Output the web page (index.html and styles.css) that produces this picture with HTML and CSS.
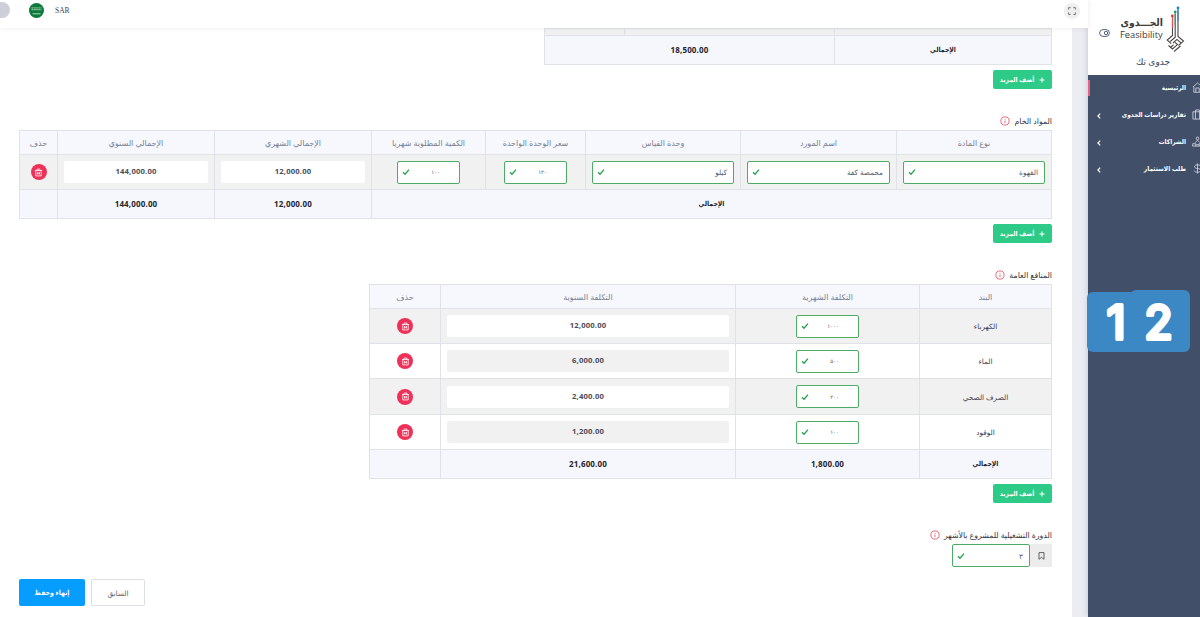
FILE: index.html
```
<!DOCTYPE html>
<html lang="ar" dir="rtl">
<head>
  <meta charset="UTF-8" />
  <meta name="viewport" content="width=device-width, initial-scale=1" />
  <title>جدوى تك</title>
  <link rel="stylesheet" href="styles.css">
</head>
<body>
  <!-- shared icons -->
  <svg width="0" height="0" class="icon-defs" aria-hidden="true">
    <symbol id="i-check" viewBox="0 0 8 8"><path d="M1 4.3 3 6.2 7 1.6" fill="none" stroke="#28a04c" stroke-width="1.3"/></symbol>
    <symbol id="i-info" viewBox="0 0 10 10"><circle cx="5" cy="5" r="4.1" fill="none" stroke="#e0475b" stroke-width=".8"/><path d="M5 4.5v2.6M5 2.8v.9" stroke="#e0475b" stroke-width=".8"/></symbol>
    <symbol id="i-trash" viewBox="0 0 10 10"><path d="M1 2.8h8M3.4 2.6V1.2h3.2v1.4M2 3v5.8h6V3M4 4.5v2.7M6 4.5v2.7M4 5.8h2" fill="none" stroke="#fff" stroke-width=".9"/></symbol>
    <symbol id="i-chevron" viewBox="0 0 6 8"><path d="M4.2 1.6 1.9 4l2.3 2.4" fill="none" stroke="#fff" stroke-width="1.2"/></symbol>
    <symbol id="i-plus" viewBox="0 0 6 6"><path d="M3 .5v5M.5 3h5" stroke="#fff" stroke-width="1"/></symbol>
  </svg>

  <div class="app">
    <aside class="sidebar">
      <div class="brand">
        <div class="brand-row">
          <svg class="brand-mark" width="19" height="47" viewBox="0 0 19 47">
            <g fill="none" stroke="#4a4644" stroke-width="1.1">
              <path d="M6.5 12v17.5L1.2 34l4 3.6"/>
              <path d="M9.2 8v23.2L4.2 35.5M2.5 39.5l4 3.5 5-4.4-2.5-2.2"/>
              <path d="M12 4v26.5l5.5 4.6-5 4.4M7 37l4-3.6 4.5 4M4.5 41.5l3-2.6M8 45.5l6.5-5.5"/>
            </g>
            <path d="M6.5 10v12" stroke="#e8505b" stroke-width="1.2"/>
            <path d="M9.2 6v13" stroke="#2fa878" stroke-width="1.2"/>
            <path d="M12 2v13" stroke="#3c86c8" stroke-width="1.2"/>
            <circle cx="6.3" cy="10" r="1.4" fill="#e8333f"/>
            <circle cx="9.2" cy="6" r="1.4" fill="#20a06a"/>
            <circle cx="12" cy="2" r="1.4" fill="#1f7fd0"/>
          </svg>
          <div class="brand-name">
            <span class="brand-ar">الجـــدوى</span>
            <span class="brand-en">Feasibility</span>
          </div>
          <svg class="brand-toggle" width="11" height="8" viewBox="0 0 11 8"><rect x=".6" y=".6" width="9.8" height="6.8" rx="3.4" fill="none" stroke="#46526b" stroke-width=".9"/><circle cx="7" cy="4" r="1.7" fill="none" stroke="#46526b" stroke-width=".9"/></svg>
        </div>
        <div class="brand-sub">جدوى تك</div>
      </div>
      <nav class="menu">
        <a class="menu-item active">
          <svg class="menu-icon" viewBox="0 0 12 12"><path d="M1 5.5 6 1l5 4.5M2 5v6.2h8V5M4.2 11V6.5h3.6V11" /></svg>
          <span>الرئيسية</span>
        </a>
        <a class="menu-item">
          <svg class="menu-icon" viewBox="0 0 12 12"><path d="M1 3h10v8H1zM4 3V1h4v2M3.8 3v8M8.2 3v8" /></svg>
          <span>تقارير دراسات الجدوى</span>
          <svg class="menu-arrow" width="6" height="8"><use href="#i-chevron"/></svg>
        </a>
        <a class="menu-item">
          <svg class="menu-icon" viewBox="0 0 12 12"><path d="M6 1a1.5 1.5 0 1 1 0 3a1.5 1.5 0 1 1 0-3M3.4 7.2 6 4.6l2.6 2.6M.8 11V8.4h3.4V11M7.8 11V8.4h3.4V11M.5 11h11M4.5 9.5h3" /></svg>
          <span>الشراكات</span>
          <svg class="menu-arrow" width="6" height="8"><use href="#i-chevron"/></svg>
        </a>
        <a class="menu-item">
          <svg class="menu-icon" viewBox="0 0 12 12"><path d="M6 .5v11M9.3 3.6C9 2.4 7.8 2 6 2S2.8 2.7 2.8 4 4 5.8 6 6s3.4.7 3.4 2S8 10 6 10 2.8 9.5 2.5 8.3" /></svg>
          <span>طلب الاستثمار</span>
          <svg class="menu-arrow" width="6" height="8"><use href="#i-chevron"/></svg>
        </a>
      </nav>
    </aside>

    <div class="page">
      <header class="topbar">
        <button class="fullscreen" aria-label="ملء الشاشة">
          <svg width="8" height="8" viewBox="0 0 8 8"><path d="M.6 2.6V.6h2M5.4.6h2v2M7.4 5.4v2h-2M2.6 7.4h-2v-2" fill="none" stroke="#666" stroke-width=".9"/></svg>
        </button>
        <div class="topbar-user">
          <span class="currency">SAR</span>
          <svg class="flag" width="15" height="15" viewBox="0 0 15 15"><circle cx="7.5" cy="7.5" r="7.5" fill="#0b7a3b"/><path d="M2.5 4.8h10M2.5 6.6h10" stroke="#8cc29b" stroke-width="1.3" stroke-dasharray="1.5 .4"/><path d="M3.5 10.8h8" stroke="#d5eadb" stroke-width=".8"/></svg>
          <span class="avatar"></span>
        </div>
      </header>

      <main class="content">
        <table class="grid grid-top">
          <colgroup><col style="width:217px"><col style="width:210px"><col style="width:80px"></colgroup>
          <tr class="cut"><td></td><td></td><td></td></tr>
          <tr class="total"><td>الإجمالي</td><td colspan="2" class="num">18,500.00</td></tr>
        </table>
        <button class="btn-add"><svg width="6" height="6"><use href="#i-plus"/></svg> أضف المزيد</button>

        <h3 class="section-title">المواد الخام <svg width="10" height="10"><use href="#i-info"/></svg></h3>
        <table class="grid">
          <colgroup><col style="width:155px"><col style="width:156px"><col style="width:155px"><col style="width:100px"><col style="width:114px"><col style="width:157px"><col style="width:157px"><col style="width:38px"></colgroup>
          <tr class="head"><th>نوع المادة</th><th>اسم المورد</th><th>وحدة القياس</th><th>سعر الوحدة الواحدة</th><th>الكمية المطلوبة شهريا</th><th>الإجمالي الشهري</th><th>الإجمالي السنوي</th><th>حذف</th></tr>
          <tr class="row odd">
            <td><div class="field">القهوة<svg width="8" height="8"><use href="#i-check"/></svg></div></td>
            <td><div class="field">محمصة كفة<svg width="8" height="8"><use href="#i-check"/></svg></div></td>
            <td><div class="field">كيلو<svg width="8" height="8"><use href="#i-check"/></svg></div></td>
            <td><div class="field small"><span>١٢٠</span><svg width="8" height="8"><use href="#i-check"/></svg></div></td>
            <td><div class="field small"><span>١٠٠</span><svg width="8" height="8"><use href="#i-check"/></svg></div></td>
            <td><div class="readonly">12,000.00</div></td>
            <td><div class="readonly">144,000.00</div></td>
            <td><button class="delete" aria-label="حذف"><svg width="9" height="9"><use href="#i-trash"/></svg></button></td>
          </tr>
          <tr class="total"><td colspan="5">الإجمالي</td><td class="num">12,000.00</td><td class="num">144,000.00</td><td></td></tr>
        </table>
        <button class="btn-add"><svg width="6" height="6"><use href="#i-plus"/></svg> أضف المزيد</button>

        <h3 class="section-title">المنافع العامة <svg width="10" height="10"><use href="#i-info"/></svg></h3>
        <table class="grid grid-utilities">
          <colgroup><col style="width:132px"><col style="width:184px"><col style="width:295px"><col style="width:71px"></colgroup>
          <tr class="head"><th>البند</th><th>التكلفة الشهرية</th><th>التكلفة السنوية</th><th>حذف</th></tr>
          <tr class="row odd">
            <td>الكهرباء</td>
            <td><div class="field small"><span>١٠٠٠</span><svg width="8" height="8"><use href="#i-check"/></svg></div></td>
            <td><div class="readonly">12,000.00</div></td>
            <td><button class="delete" aria-label="حذف"><svg width="9" height="9"><use href="#i-trash"/></svg></button></td>
          </tr>
          <tr class="row">
            <td>الماء</td>
            <td><div class="field small"><span>٥٠٠</span><svg width="8" height="8"><use href="#i-check"/></svg></div></td>
            <td><div class="readonly">6,000.00</div></td>
            <td><button class="delete" aria-label="حذف"><svg width="9" height="9"><use href="#i-trash"/></svg></button></td>
          </tr>
          <tr class="row odd tall">
            <td>الصرف الصحي</td>
            <td><div class="field small"><span>٢٠٠</span><svg width="8" height="8"><use href="#i-check"/></svg></div></td>
            <td><div class="readonly">2,400.00</div></td>
            <td><button class="delete" aria-label="حذف"><svg width="9" height="9"><use href="#i-trash"/></svg></button></td>
          </tr>
          <tr class="row">
            <td>الوقود</td>
            <td><div class="field small"><span>١٠٠</span><svg width="8" height="8"><use href="#i-check"/></svg></div></td>
            <td><div class="readonly">1,200.00</div></td>
            <td><button class="delete" aria-label="حذف"><svg width="9" height="9"><use href="#i-trash"/></svg></button></td>
          </tr>
          <tr class="total"><td>الإجمالي</td><td class="num">1,800.00</td><td class="num">21,600.00</td><td></td></tr>
        </table>
        <button class="btn-add"><svg width="6" height="6"><use href="#i-plus"/></svg> أضف المزيد</button>

        <h3 class="section-title">الدورة التشغيلية للمشروع بالأشهر <svg width="10" height="10"><use href="#i-info"/></svg></h3>
        <div class="input-group">
          <span class="addon"><svg width="7" height="8" viewBox="0 0 7 8"><path d="M1 .6h5v6.7L3.5 5.3 1 7.3z" fill="none" stroke="#555" stroke-width=".9"/></svg></span>
          <div class="field">٣<svg width="8" height="8"><use href="#i-check"/></svg></div>
        </div>

        <div class="actions">
          <button class="btn-save">إنهاء وحفظ</button>
          <button class="btn-prev">السابق</button>
        </div>
      </main>
    </div>
  </div>

  <!-- number sticker -->
  <svg class="sticker" width="104" height="64" viewBox="0 0 104 64" direction="ltr">
    <rect x="0" y="2" width="60" height="60" rx="6"/>
    <rect x="43" y="0" width="60" height="62" rx="6"/>
    <text x="29" y="49">1</text>
    <text x="71.5" y="49">2</text>
  </svg>
</body>
</html>
```
FILE: styles.css
```
:root {
  --navy: #424f69;
  --line: #dfe2e9;
  --green: #2dcb87;
  --valid: #4dab66;
  --red: #ee3158;
  --blue: #079dff;
  --bold-font: "Open Sans", "DejaVu Sans Condensed", "DejaVu Sans", sans-serif;
}

* {
  box-sizing: border-box;
}

body {
  margin: 0;
  width: 1200px;
  height: 617px;
  overflow: hidden;
  position: relative;
  background: #ebedf2;
  color: #3f4254;
  font-family: "Open Sans", "DejaVu Sans", sans-serif;
  font-size: 7.3px;
}

button {
  border: 0;
  padding: 0;
  font-family: inherit;
}

.icon-defs {
  position: absolute;
}

.app {
  display: flex;
  height: 617px;
}

/* sidebar */
.sidebar {
  width: 112px;
  flex: none;
  background: var(--navy);
  overflow: hidden;
  box-shadow: 0 0 6px rgba(60, 70, 95, 0.25);
}

.brand {
  height: 75px;
  background: #fff;
  padding-top: 6px;
  color: #3c3a3a;
}

.brand-row {
  display: flex;
  height: 47px;
  padding-right: 15px;
}

.brand-name {
  display: flex;
  flex-direction: column;
  width: 43px;
  margin: 10px 3px 0 0;
  white-space: nowrap;
}

.brand-ar {
  font-family: "DejaVu Sans Condensed", "DejaVu Sans", sans-serif;
  font-size: 10.3px;
  line-height: 13px;
  font-weight: bold;
}

.brand-en {
  direction: ltr;
  font-size: 9.3px;
  line-height: 12px;
}

.brand-toggle {
  margin: 23px 10px 0 0;
}

.brand-sub {
  width: 64px;
  margin-right: 15px;
  text-align: center;
  font-size: 9px;
  line-height: 18px;
  color: #34425e;
}

.menu {
  margin-top: -1px;
}

.menu-item {
  display: flex;
  align-items: center;
  height: 27px;
  padding-left: 8px;
  color: #fff;
  font-family: var(--bold-font);
  font-size: 6.5px;
  font-weight: bold;
  white-space: nowrap;
}

.menu-item.active {
  border: 0 solid;
  border-image: linear-gradient(transparent 25%, #e5637d 25%, #e5637d 78%, transparent 78%) 1;
  border-width: 0 0 0 2px;
}

.menu-icon {
  width: 11px;
  height: 11px;
  margin: 0 -3px 0 6px;
  fill: none;
  stroke: #d3d8e2;
  stroke-width: 0.9;
  flex: none;
}

.menu-arrow {
  margin-right: auto;
  margin-top: 3px;
}

/* page */
.page {
  flex: 1;
  min-width: 0;
}

.topbar {
  position: relative;
  height: 28px;
  display: flex;
  justify-content: space-between;
  background: #fff;
  box-shadow: 0 0 5px rgba(80, 90, 110, 0.12);
  padding: 2px 8px 0 0;
}

.fullscreen {
  width: 16px;
  height: 16px;
  margin-top: 1px;
  border-radius: 50%;
  background: #efefef;
  display: grid;
  place-items: center;
}

.topbar-user {
  display: flex;
  align-items: center;
  height: 16px;
}

.currency {
  font-family: "Liberation Serif", serif;
  font-size: 7.5px;
  margin-left: 11px;
}

.flag {
  margin-left: 19px;
}

.avatar {
  width: 10px;
  height: 16px;
  border-radius: 0 8px 8px 0;
  background: #cdd0d8;
}

.content {
  width: 1072px;
  height: 589px;
  margin-left: auto;
  margin-right: 16px;
  padding: 0 20px 0 19px;
  background: #fff;
}

/* tables */
.grid {
  width: 1033px;
  border-collapse: collapse;
  table-layout: fixed;
}

.grid-top {
  width: 508px;
}

.grid-utilities {
  width: 683px;
}

.grid th,
.grid td {
  border: 1px solid var(--line);
  padding: 0 6px;
  text-align: center;
  line-height: 10px;
  white-space: nowrap;
}

.grid th {
  font-size: 8px;
  font-weight: normal;
  color: #787f91;
}

.head {
  height: 24px;
  background: #f6f8fd;
}

.row {
  height: 35px;
}

.row.tall {
  height: 36px;
}

.odd,
.cut {
  background: #f1f1f1;
}

.cut {
  height: 7px;
}

.total {
  height: 29px;
  background: #f6f7fc;
  color: #23252f;
  font-family: var(--bold-font);
  font-size: 6.8px;
  font-weight: bold;
}

.grid .num,
.readonly {
  font-size: 8px;
  font-weight: bold;
  letter-spacing: 0.15px;
}

.grid .readonly {
  font-size: 7.7px;
}

.field {
  display: flex;
  align-items: center;
  justify-content: space-between;
  height: 23px;
  padding: 0 6px 0 4px;
  border: 1px solid var(--valid);
  border-radius: 2px;
  background: #fff;
  color: #555b69;
}

.field.small {
  width: 63px;
  margin: 0 auto;
  padding-right: 19px;
}

.field.small span {
  font-size: 5.5px;
}

.readonly {
  height: 22px;
  border-radius: 2px;
  background: #fff;
  line-height: 21px;
  color: #4b4e5c;
}

.row:not(.odd) .readonly {
  background: #f1f1f1;
}

.delete {
  width: 16px;
  height: 16px;
  border-radius: 50%;
  background: var(--red);
  display: grid;
  place-items: center;
  margin: 0 auto;
}

.btn-add {
  display: flex;
  align-items: center;
  justify-content: center;
  gap: 5px;
  width: 59px;
  height: 19px;
  margin-top: 5px;
  border-radius: 2px;
  background: var(--green);
  color: #fff;
  font-family: var(--bold-font);
  font-size: 6.7px;
  font-weight: bold;
  white-space: nowrap;
}

.section-title {
  display: flex;
  align-items: center;
  gap: 4px;
  height: 19px;
  margin: 22px 0 0;
  font-size: 7.8px;
  font-weight: normal;
  color: #33353f;
}

.input-group {
  display: flex;
  width: 100px;
  height: 23px;
}

.input-group .field {
  flex: 1;
}

.addon {
  width: 22px;
  display: grid;
  place-items: center;
  background: #ececec;
}

.actions {
  display: flex;
  direction: ltr;
  gap: 6px;
  margin-top: 12px;
}

.actions button {
  height: 27px;
  border-radius: 2px;
  font-size: 7.3px;
}

.actions .btn-save {
  width: 66px;
  background: var(--blue);
  color: #fff;
  font-family: var(--bold-font);
  font-size: 6.8px;
  font-weight: bold;
}

.actions .btn-prev {
  width: 54px;
  background: #fff;
  border: 1px solid #dcdfe5;
  color: #5d6474;
}

/* sits over the sidebar */
.sticker {
  position: absolute;
  left: 1087px;
  top: 290px;
}

.sticker rect {
  fill: #3b88c4;
}

.sticker text {
  font-family: Inter, sans-serif;
  font-size: 46px;
  font-weight: 400;
  text-anchor: middle;
  fill: #fff;
  stroke: #fff;
  stroke-width: 4px;
  stroke-linejoin: round;
}
```
